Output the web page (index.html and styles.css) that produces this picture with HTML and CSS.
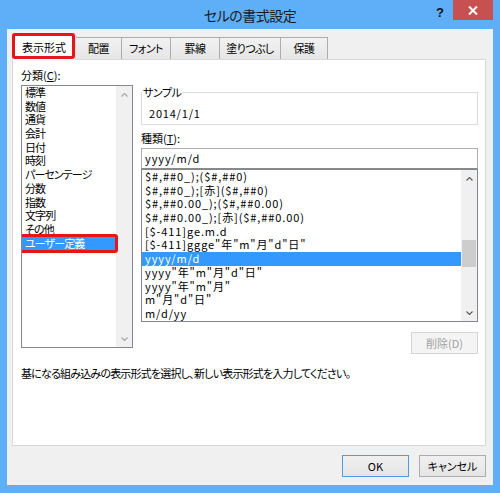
FILE: index.html
```html
<!DOCTYPE html>
<html lang="ja">
<head>
<meta charset="utf-8">
<title>セルの書式設定</title>
<link rel="stylesheet" href="styles.css">
</head>
<body>
<div class="window">
  <div class="titlebar">
    <div></div>
    <div class="title">セルの書式設定</div>
    <div class="tb-right">
      <span class="help">?</span>
      <span class="close"><svg width="10" height="9" viewBox="0 0 10 9"><path d="M1 0.5 L9 8.5 M9 0.5 L1 8.5" stroke="#fff" stroke-width="2"/></svg></span>
    </div>
  </div>
  <div class="body">
    <div class="tabs">
      <div class="tab active">表示形式</div>
      <div class="tab t-haichi">配置</div>
      <div class="tab t-font">フォント</div>
      <div class="tab t-keisen">罫線</div>
      <div class="tab t-nuri">塗りつぶし</div>
      <div class="tab t-hogo">保護</div>
    </div>
    <div class="panel">
      <div class="cols">
        <div class="left">
          <div class="label">分類(<u>C</u>):</div>
          <div class="listbox cat">
            <ul class="items">
              <li>標準</li>
              <li>数値</li>
              <li>通貨</li>
              <li>会計</li>
              <li>日付</li>
              <li>時刻</li>
              <li>パーセンテージ</li>
              <li>分数</li>
              <li>指数</li>
              <li>文字列</li>
              <li>その他</li>
              <li class="sel marked">ユーザー定義</li>
            </ul>
            <div class="vscroll light">
              <div class="arrow"><svg width="7" height="4" viewBox="0 0 7 4"><polyline points="0.5,3.5 3.5,0.5 6.5,3.5" fill="none" stroke="currentColor" stroke-width="1.2"/></svg></div>
              <div class="track"></div>
              <div class="arrow"><svg width="7" height="4" viewBox="0 0 7 4"><polyline points="0.5,0.5 3.5,3.5 6.5,0.5" fill="none" stroke="currentColor" stroke-width="1.2"/></svg></div>
            </div>
          </div>
        </div>
        <div class="right">
          <fieldset class="sample">
            <legend>サンプル</legend>
            <div class="sample-value">2014/1/1</div>
          </fieldset>
          <div class="label type-label">種類(<u>T</u>):</div>
          <div class="input">yyyy/m/d</div>
          <div class="listbox types">
            <ul class="items">
              <li>$#,##0_);($#,##0)</li>
              <li>$#,##0_);[赤]($#,##0)</li>
              <li>$#,##0.00_);($#,##0.00)</li>
              <li>$#,##0.00_);[赤]($#,##0.00)</li>
              <li>[$-411]ge.m.d</li>
              <li>[$-411]ggge"年"m"月"d"日"</li>
              <li class="sel">yyyy/m/d</li>
              <li>yyyy"年"m"月"d"日"</li>
              <li>yyyy"年"m"月"</li>
              <li>m"月"d"日"</li>
              <li>m/d/yy</li>
            </ul>
            <div class="vscroll">
              <div class="arrow"><svg width="7" height="4" viewBox="0 0 7 4"><polyline points="0.5,3.5 3.5,0.5 6.5,3.5" fill="none" stroke="currentColor" stroke-width="1.2"/></svg></div>
              <div class="track"><div class="thumb"></div></div>
              <div class="arrow"><svg width="7" height="4" viewBox="0 0 7 4"><polyline points="0.5,0.5 3.5,3.5 6.5,0.5" fill="none" stroke="currentColor" stroke-width="1.2"/></svg></div>
            </div>
          </div>
          <div class="btnrow"><button class="btn disabled">削除(D)</button></div>
        </div>
      </div>
      <p class="desc">基になる組み込みの表示形式を選択し、新しい表示形式を入力してください。</p>
    </div>
    <div class="footer">
      <button class="btn ok">OK</button>
      <button class="btn">キャンセル</button>
    </div>
  </div>
</div>
</body>
</html>
```

FILE: styles.css
```css
html, body {
  margin: 0;
  padding: 0;
}
body {
  font-family: "Noto Sans CJK JP", "Noto Sans", sans-serif;
  font-size: 11px;
  font-feature-settings: "palt";
  color: #000;
}
.window {
  width: 500px;
  height: 493px;
  box-sizing: border-box;
  background: #5eaef8;
  padding: 0 7px 8px 7px;
  display: flex;
  flex-direction: column;
}
.titlebar {
  height: 29px;
  flex: none;
  display: grid;
  grid-template-columns: 1fr auto 1fr;
}
.title {
  font-size: 14px;
  line-height: 30px;
  letter-spacing: -0.5px;
  color: #1a1a1a;
}
.tb-right {
  display: flex;
  justify-content: flex-end;
  align-items: flex-start;
}
.help {
  font-family: "Liberation Sans", sans-serif;
  font-weight: bold;
  font-size: 13px;
  line-height: 14px;
  margin-top: 6px;
  margin-right: 9px;
  color: #111;
}
.close {
  width: 40px;
  height: 20px;
  background: #c75050;
  display: flex;
  align-items: center;
  justify-content: center;
}
.body {
  flex: 1;
  background: #f0f0f0;
  padding: 4px 7px 8px 5px;
  display: flex;
  flex-direction: column;
}
.tabs {
  display: flex;
  align-items: flex-end;
  height: 26px;
  flex: none;
  position: relative;
  z-index: 1;
}
.tab {
  height: 22px;
  box-sizing: border-box;
  border: 1px solid #acacac;
  border-bottom: none;
  background: linear-gradient(#f2f2f2, #e6e6e6);
  line-height: 21px;
  margin-left: -1px;
  white-space: nowrap;
  text-align: center;
  letter-spacing: -0.6px;
}
.t-haichi { width: 47px; }
.t-font { width: 50px; }
.t-keisen { width: 50px; }
.t-nuri { width: 62px; }
.t-hogo { width: 48px; }
.tab.active {
  width: 64px;
  height: 27px;
  margin-bottom: -1px;
  margin-left: 0;
  background: #fff;
  border-color: #d9d9d9;
  line-height: 26px;
  letter-spacing: 0;
  position: relative;
  z-index: 2;
}
.tab.active::after {
  content: "";
  position: absolute;
  top: -1px;
  left: -1px;
  right: 0;
  bottom: 1px;
  border: 3px solid #e8141c;
  border-radius: 3px;
}
.panel {
  background: #fff;
  border: 1px solid #d9d9d9;
  height: 387px;
  flex: none;
  box-sizing: border-box;
  padding: 8px 7px 0 8px;
}
.cols {
  display: grid;
  grid-template-columns: 112px 337px;
  column-gap: 8px;
}
.label {
  line-height: 14px;
}
u {
  text-decoration: underline;
  text-underline-offset: 1px;
}
.listbox {
  border: 1px solid #828790;
  display: flex;
  overflow: hidden;
  background: #fff;
}
.listbox.cat {
  margin-top: 3px;
  height: 263px;
  box-sizing: border-box;
}
.listbox.cat .items li {
  letter-spacing: -0.9px;
}
.items {
  list-style: none;
  margin: 0;
  padding: 0;
  flex: 1;
}
.items li {
  line-height: 13.7px;
  height: 13.7px;
  padding-left: 3px;
  white-space: nowrap;
}
.listbox.types .items li {
  letter-spacing: 0.9px;
}
.items li.sel {
  background: #3399ff;
  color: #fff;
}
.items li.marked {
  position: relative;
}
.items li.marked::after {
  content: "";
  position: absolute;
  top: -3px;
  bottom: -3px;
  left: -3px;
  right: -2px;
  border: 3px solid #e8141c;
  border-radius: 3px;
}
.vscroll {
  width: 16px;
  flex: none;
  background: #f0f0f0;
  display: flex;
  flex-direction: column;
  color: #606060;
}
.vscroll.light {
  color: #a8a8a8;
}
.arrow {
  height: 17px;
  display: flex;
  align-items: center;
  justify-content: center;
}
.track {
  flex: 1;
  padding: 0 1px;
}
.thumb {
  margin-top: 53px;
  height: 27px;
  background: #cdcdcd;
}
.right {
  padding-top: 17px;
}
.sample {
  margin: 0;
  border: 1px solid #dcdcdc;
  padding: 7px 0 4px 7px;
  min-width: 0;
}
.sample legend {
  padding: 0 1px;
  margin-left: -7px;
  line-height: 14px;
  letter-spacing: -0.5px;
}
.sample-value {
  line-height: 14px;
  letter-spacing: 0.8px;
}
.type-label {
  margin-top: 6px;
}
.input {
  margin-top: 3px;
  height: 21px;
  box-sizing: border-box;
  border: 1px solid #abadb3;
  border-bottom-color: #8a8a8a;
  line-height: 19px;
  padding-left: 3px;
  letter-spacing: 0.9px;
}
.listbox.types {
  height: 153px;
  box-sizing: border-box;
}
.btnrow {
  display: flex;
  justify-content: flex-end;
  margin-top: 10px;
}
.btn {
  width: 67px;
  height: 22px;
  box-sizing: border-box;
  border: 1px solid #acacac;
  background: linear-gradient(#f0f0f0, #e5e5e5);
  font-family: inherit;
  font-size: 11px;
  font-feature-settings: "palt";
  color: #000;
  padding: 0;
  margin: 0;
}
.btn.disabled {
  background: #f4f4f4;
  border-color: #d5d5d5;
  color: #a0a0a0;
}
.btn.ok {
  border-color: #4d9de6;
}
.desc {
  margin: 12px 0 0 0;
  line-height: 14px;
  letter-spacing: -0.8px;
}
.footer {
  margin-top: 9px;
  display: flex;
  justify-content: flex-end;
  gap: 10px;
}
```
